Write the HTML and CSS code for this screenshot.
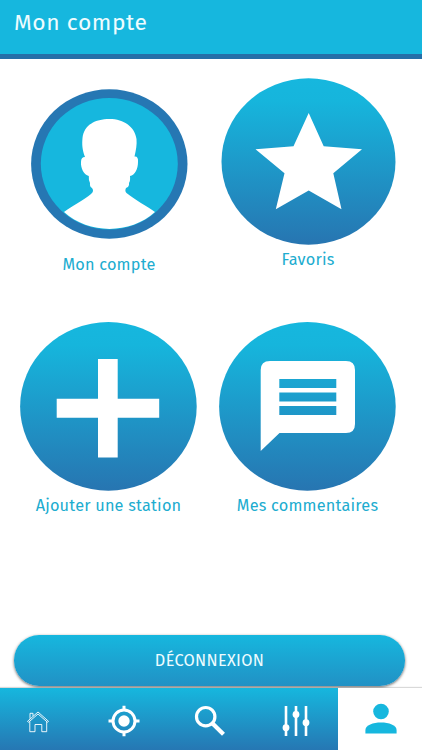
FILE: index.html
```html
<!DOCTYPE html>
<html lang="fr">
<head>
<meta charset="utf-8">
<title>Mon compte</title>
<link rel="stylesheet" href="styles.css">
</head>
<body>
<div class="app">
  <header class="header"><h1 class="title">Mon compte</h1></header>
  <main class="tiles">
    <a class="tile account">
      <svg width="157" height="150" viewBox="0 0 157 150">
        <ellipse cx="78.3" cy="75" rx="78.2" ry="74.8" fill="#2677b3"/>
        <ellipse cx="78.3" cy="74.8" rx="68.5" ry="65.7" fill="#16b7de"/>
        <path fill="#fff" d="M33 123 C41 117 53 111 60 105 C62.500 103 62.500 101 61 99 Q58.500 98 59 94 Q57.500 91 57.800 87 C53 86 49.500 79 50 73 Q50 68 54 68 C51 60 51 55 51.500 49 C53 36 64 30 78.500 30 C93 30 104 38 105.500 50 C106 56 105 61 103.500 67.500 Q107.500 67 107 73 C107 80 104 86 99 87 Q99.500 92 98 94 Q98.500 98 95 99 Q93.500 102 95.500 104 C104 111 116 117 124 123 C99 145.500 58 145.500 33 123Z"/>
      </svg>
      <span class="label">Mon compte</span>
    </a>
    <a class="tile favorites">
      <svg width="176" height="167" viewBox="-1.5 0 176 167">
        <defs><linearGradient id="sky" x2="0" y2="1"><stop stop-color="#16b7de"/><stop offset=".14" stop-color="#16b5dc"/><stop offset="1" stop-color="#2775b1"/></linearGradient></defs>
        <ellipse cx="87" cy="83.500" rx="87" ry="83.200" fill="url(#sky)"/>
        <path fill="#fff" d="M87.200 35 L102.200 68.200 L140.500 71.200 L111.800 95.200 L120 131.200 L87.200 112.500 L54.300 131.200 L63 95.200 L34 71.200 L72 68.200Z"/>
      </svg>
      <span class="label">Favoris</span>
    </a>
    <a class="tile">
      <svg width="177" height="169" viewBox="0 0 177 169">
        <ellipse cx="88.400" cy="84.400" rx="88.300" ry="84.300" fill="url(#sky)"/>
        <path fill="#fff" d="M78 37H97.700V76.800H139.200V95.800H97.700V135.500H78V95.800H36.700V76.800H78Z"/>
      </svg>
      <span class="label">Ajouter une station</span>
    </a>
    <a class="tile">
      <svg width="177" height="169" viewBox="0 0 177 169">
        <ellipse cx="88.400" cy="84.400" rx="88.300" ry="84.300" fill="url(#sky)"/>
        <path fill="#fff" fill-rule="evenodd" d="M51 39H127Q136 39 136 48V102Q136 111 127 111H60.500L41.700 129V48Q41.700 39 51 39ZM60.300 57V66H117.300V57ZM60.300 70.500V79.500H117.300V70.500ZM60.300 84V93H117.300V84Z"/>
      </svg>
      <span class="label">Mes commentaires</span>
    </a>
  </main>
  <button class="logout">DÉCONNEXION</button>
  <nav class="nav">
    <a class="tab"><svg width="24" height="24" viewBox="0 0 24 24" fill="none" stroke="#fff" stroke-width=".9"><path d="M1.500 12.300 L12 3 L22.500 12.300 L21.500 13.300 L12 5 L2.500 13.300Z M4 9.800V4.300H7V7.200 M3.800 12.500V22.700H9V15.500H15.800V22.700H20.700V12.500"/></svg></a>
    <a class="tab"><svg width="32" height="32" viewBox="0 0 32 32" fill="none" stroke="#fff"><circle cx="16" cy="16" r="11" stroke-width="3"/><circle cx="16" cy="16" r="5.700" fill="#fff" stroke="none"/><path stroke-width="3" d="M16 .8V5M16 27V31.200M.5 16H5M27 16H31.500"/></svg></a>
    <a class="tab"><svg width="32" height="32" viewBox="0 0 32 32" fill="none" stroke="#fff"><circle cx="11.700" cy="11.700" r="9.200" stroke-width="3.200"/><path stroke-width="4.200" d="M18.800 18.800 L29.500 29.300"/></svg></a>
    <a class="tab filters"><svg width="28" height="32" viewBox="0 0 28 32" fill="#fff" stroke="#fff" stroke-width="2.600"><path d="M4 1V31M14 1V31M24 1V31"/><g stroke="none"><circle cx="4" cy="22.700" r="3.400"/><circle cx="14" cy="9.500" r="3.400"/><circle cx="24" cy="17.700" r="3.400"/></g></svg></a>
    <a class="tab active"><svg width="32" height="32" viewBox="0 0 32 32" fill="#16b7de"><circle cx="16" cy="8.500" r="7.800"/><path d="M.4 30.500V27C.4 17 31.600 17 31.600 27V30.500Z"/></svg></a>
  </nav>
</div>
</body>
</html>
```
FILE: styles.css
```css
* { box-sizing: border-box; }
body {
  margin: 0;
  background: #fff;
  font-family: "Fira Sans", "Noto Sans", sans-serif;
}
.app {
  width: 422px;
  height: 750px;
  display: flex;
  flex-direction: column;
  overflow: hidden;
}
.header {
  flex: none;
  height: 59px;
  padding: 8px 14px 0;
  background: #16b7de;
  border-bottom: 5px solid #256fa8;
}
.title {
  margin: 0;
  color: #eefcff;
  font-size: 22.8px;
  line-height: 30px;
  font-weight: 400;
  letter-spacing: .6px;
}
.tiles {
  height: 576px;
  flex: none;
  padding: 19px 26px 0 20px;
  display: grid;
  grid-template-columns: 177px 177px;
  grid-template-rows: 244px 220px;
  column-gap: 22px;
}
.tile {
  display: flex;
  flex-direction: column;
  align-items: center;
}
.tile svg { flex: none; display: block; }
.account { padding: 11px 0 0 1px; }
.favorites { padding-left: 1px; }
.label {
  color: #20accf;
  font-size: 16.3px;
  line-height: 22px;
  margin-top: 4px;
  letter-spacing: .2px;
  white-space: nowrap;
}
.account .label { margin-top: 15px; }
.logout {
  flex: none;
  width: 391px;
  height: 51px;
  margin: 0 0 2px 14px;
  padding: 0;
  border: 0;
  border-radius: 25px;
  background: linear-gradient(#16b7de, #2191c5);
  box-shadow: 0 1px 3px rgba(0, 0, 0, .6);
  color: #eefcff;
  font: inherit;
  font-size: 16.3px;
  letter-spacing: .3px;
}
.nav {
  flex: none;
  height: 62px;
  display: grid;
  grid-template-columns: 76px 95px 77px 90px 84px;
  background: linear-gradient(#16b7de, #2677b3);
  box-shadow: 0 -1px 1px rgba(0, 0, 0, .15);
}
.tab {
  display: flex;
  align-items: center;
  justify-content: center;
  padding-top: 4px;
}
.filters { padding-left: 5px; }
.active { background: #fff; padding: 0 0 0 2px; }
```
